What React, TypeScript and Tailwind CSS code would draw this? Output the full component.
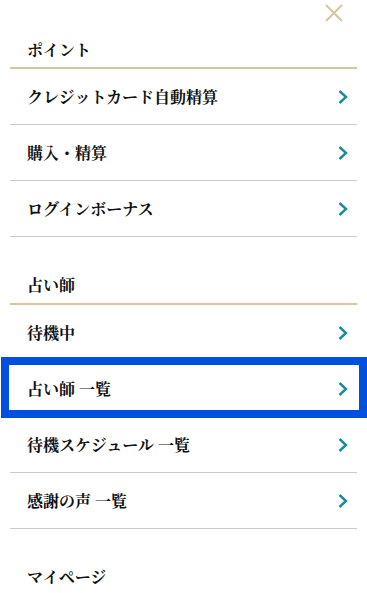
import { Fragment } from "react";

type Section = {
  title: string;
  items: { label: string; highlight?: boolean }[];
};

const SECTIONS: Section[] = [
  {
    title: "ポイント",
    items: [
      { label: "クレジットカード自動精算" },
      { label: "購入・精算" },
      { label: "ログインボーナス" },
    ],
  },
  {
    title: "占い師",
    items: [
      { label: "待機中" },
      { label: "占い師 一覧", highlight: true },
      { label: "待機スケジュール 一覧" },
      { label: "感謝の声 一覧" },
    ],
  },
  {
    title: "マイページ",
    items: [],
  },
];

const App = () => {
  return (
    <div
      className="min-h-screen bg-white text-[#111]"
      style={{ fontFamily: '"Noto Serif CJK JP", "Noto Sans CJK JP", serif' }}
    >
      <div className="flex h-[28px] justify-end pr-[24px] pt-[4px]">
        <CloseIcon />
      </div>

      <nav className="mx-[10px]">
        {SECTIONS.map((section, index) => (
          <Fragment key={section.title}>
            <h3
              className={`px-[17px] pb-[7px] text-[16px] font-bold leading-[20px] ${
                index === 0 ? "border-b-2 border-[#d5c69f] pt-[12px]" : "pt-[38px]"
              } ${index === 1 ? "border-b-2 border-[#d5c69f] pb-[8px]" : ""}`}
            >
              {section.title}
            </h3>
            <ul>
              {section.items.map((item) => (
                <li key={item.label} className="relative flex h-[56px] items-center justify-between border-b border-[#cccccc] pl-[17px] pr-[9px]">
                  <span className="text-[16px] font-bold leading-[20px]">{item.label}</span>
                  <Chevron />
                  {item.highlight && (
                    <div className="pointer-events-none absolute -bottom-[2px] -left-[9px] -right-[10px] -top-[4px] border-8 border-[#0050e0]" />
                  )}
                </li>
              ))}
            </ul>
          </Fragment>
        ))}
      </nav>
    </div>
  );
};

const CloseIcon = () => (
  <svg width="18" height="18" viewBox="0 0 18 18" fill="none">
    <path d="M1 1L17 17M17 1L1 17" stroke="#d5c69f" strokeWidth="2" />
  </svg>
);

const Chevron = () => (
  <svg width="10" height="14" viewBox="0 0 10 14" fill="none">
    <path d="M1.5 1L8 7L1.5 13" stroke="#1b8a9b" strokeWidth="2.4" />
  </svg>
);

export default App;
